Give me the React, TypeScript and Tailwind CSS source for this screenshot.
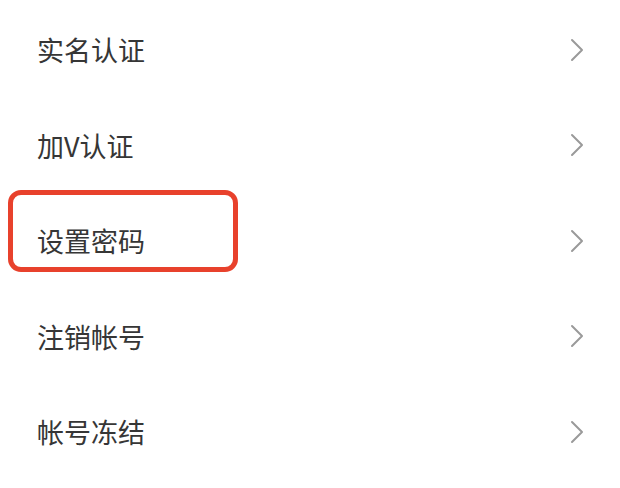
import React from 'react';

const items = ['实名认证', '加V认证', '设置密码', '注销帐号', '帐号冻结'];

const Chevron: React.FC = () => (
  <svg width="14" height="24" viewBox="0 0 14 24" fill="none" className="shrink-0">
    <path d="M2 2 L12 12 L2 22" stroke="#9a9a9a" strokeWidth="2" strokeLinecap="round" strokeLinejoin="round" />
  </svg>
);

const App: React.FC = () => {
  return (
    <div
      className="w-[620px] h-[488px] bg-white overflow-hidden pt-[2px]"
      style={{ fontFamily: '"Noto Sans CJK SC", "Noto Sans", sans-serif' }}
    >
      {items.map((label) => (
        <div key={label} className="h-[95.5px] flex items-center justify-between pl-[37px] pr-[36px]">
          <div className="relative">
            <span className="block text-[27px] leading-[27px] text-[#363636]">{label}</span>
            {label === '设置密码' && (
              <div className="absolute -left-[29px] -top-[37px] w-[230px] h-[82px] border-[5px] border-[#e8412c] rounded-[13px]" />
            )}
          </div>
          <Chevron />
        </div>
      ))}
    </div>
  );
};

export default App;
